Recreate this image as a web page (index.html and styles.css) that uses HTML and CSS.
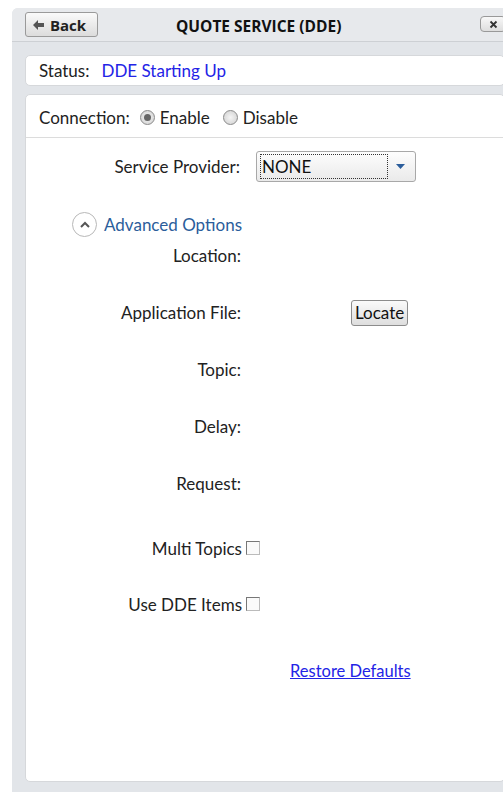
FILE: index.html
```html
<!DOCTYPE html>
<html>
<head>
<meta charset="utf-8">
<link rel="stylesheet" href="styles.css">
</head>
<body>
<div class="window">
  <header class="titlebar">
    <button class="back-btn"><svg width="11" height="10" viewBox="0 0 11 10"><path d="M0 5 L5 0 L5 3 L11 3 L11 7 L5 7 L5 10 Z" fill="#555"/></svg>Back</button>
    <h1 class="title">QUOTE SERVICE (DDE)</h1>
    <button class="close-btn"><svg width="9" height="9" viewBox="0 0 9 9"><path d="M1.5 1.5 L7.5 7.5 M7.5 1.5 L1.5 7.5" stroke="#333" stroke-width="1.8"/></svg></button>
  </header>
  <div class="body">
    <div class="card status-card">
      <span class="status-label">Status:</span>
      <span class="status-value">DDE Starting Up</span>
    </div>
    <div class="card main-card">
      <div class="connection-row">
        <span>Connection:</span>
        <label class="radio"><span class="radio-dot checked"></span>Enable</label>
        <label class="radio"><span class="radio-dot"></span>Disable</label>
      </div>
      <div class="provider-row">
        <span class="field-label">Service Provider:</span>
        <div class="select"><span class="select-value">NONE</span><svg class="select-arrow" width="9" height="5" viewBox="0 0 9 5"><path d="M0 0 H9 L4.5 5 Z" fill="#2b5d9b"/></svg></div>
      </div>
      <div class="advanced">
        <span class="adv-icon"><svg width="12" height="8" viewBox="0 0 12 8"><path d="M2 6 L6 2 L10 6" fill="none" stroke="#555" stroke-width="2"/></svg></span>
        <span class="adv-text">Advanced Options</span>
      </div>
      <div class="fields">
        <span class="field-label">Location:</span><span></span>
        <span class="field-label">Application File:</span><span class="locate-cell"><button class="locate-btn">Locate</button></span>
        <span class="field-label">Topic:</span><span></span>
        <span class="field-label">Delay:</span><span></span>
        <span class="field-label">Request:</span><span></span>
      </div>
      <div class="checks">
        <div class="check-row"><span>Multi Topics</span><span class="checkbox"></span></div>
        <div class="check-row"><span>Use DDE Items</span><span class="checkbox"></span></div>
      </div>
      <div class="restore-row"><a class="restore" href="#">Restore Defaults</a></div>
    </div>
  </div>
</div>
</body>
</html>
```
FILE: styles.css
```css
html, body {
  margin: 0;
  padding: 0;
  background: #fff;
  overflow: hidden;
}
body {
  font-family: Lato, "Open Sans", sans-serif;
  font-size: 17px;
  color: #222;
}
.window {
  margin: 8px 0 0 12px;
  width: 500px;
  height: 790px;
  background: #e2e5e9;
  border-top-left-radius: 6px;
  display: flex;
  flex-direction: column;
}
.titlebar {
  height: 33px;
  display: flex;
  align-items: center;
  padding: 0 0 0 13px;
  border-bottom: 1px solid #cdd0d4;
  background: #e7e9ec;
  border-top-left-radius: 6px;
  position: relative;
}
.back-btn {
  width: 73px;
  height: 25px;
  display: flex;
  align-items: center;
  justify-content: center;
  gap: 6px;
  font-family: "Open Sans", sans-serif;
  font-weight: bold;
  font-size: 15px;
  color: #222;
  border: 1px solid #9a9a9a;
  border-radius: 3px;
  background: linear-gradient(#fafafa, #dcdcdc);
  padding: 0 4px 0 0;
}
.title {
  margin: 2px 0 0 78px;
  font-family: "Open Sans", sans-serif;
  font-size: 15.5px;
  font-weight: bold;
  color: #111;
}
.close-btn {
  position: absolute;
  left: 468px;
  top: 8px;
  width: 26px;
  height: 16px;
  padding: 0;
  display: flex;
  align-items: center;
  justify-content: center;
  border: 1px solid #999;
  border-radius: 4px;
  background: linear-gradient(#f8f8f8, #dedede);
}
.body {
  padding: 13px 0 10px 13px;
  display: flex;
  flex-direction: column;
  gap: 8px;
  flex: 1;
}
.card {
  background: #fff;
  border: 1px solid #d6d8db;
  border-radius: 5px;
  width: 480px;
}
.status-card {
  height: 31px;
  display: flex;
  align-items: center;
  padding-left: 13px;
  box-sizing: border-box;
  gap: 12px;
}
.status-value {
  color: #2323e6;
}
.main-card {
  height: 688px;
  box-sizing: border-box;
}
.connection-row {
  height: 43px;
  border-bottom: 1px solid #dcdcdc;
  display: flex;
  align-items: center;
  padding: 3px 0 0 13px;
  box-sizing: border-box;
  gap: 10px;
}
.radio {
  display: flex;
  align-items: center;
  gap: 5px;
  margin-right: 3px;
}
.radio-dot {
  width: 15px;
  height: 15px;
  border-radius: 50%;
  border: 1px solid #8a8a8a;
  background: radial-gradient(#f4f4f4, #cfcfcf);
  box-sizing: border-box;
  position: relative;
}
.radio-dot.checked::after {
  content: "";
  position: absolute;
  left: 3px;
  top: 3px;
  width: 7px;
  height: 7px;
  border-radius: 50%;
  background: #666;
}
.field-label {
  text-align: right;
}
.provider-row {
  display: grid;
  grid-template-columns: 214px auto;
  column-gap: 16px;
  align-items: center;
  margin-top: 13px;
}
.select {
  width: 160px;
  height: 31px;
  border: 1px solid #a8a8a8;
  border-radius: 3px;
  background: linear-gradient(#fdfdfd, #eaeaea);
  display: flex;
  align-items: center;
  box-sizing: border-box;
  padding: 2px 3px;
}
.select-value {
  flex: 0 0 128px;
  height: 25px;
  border: 1px dotted #333;
  box-sizing: border-box;
  line-height: 24px;
  padding-left: 1px;
  color: #111;
}
.select-arrow {
  margin-left: 8px;
}
.advanced {
  display: flex;
  align-items: center;
  gap: 7px;
  margin: 30px 0 0 46px;
}
.adv-icon {
  width: 25px;
  height: 25px;
  border: 1px solid #b8b8b8;
  border-radius: 50%;
  display: flex;
  align-items: center;
  justify-content: center;
  box-sizing: border-box;
}
.adv-text {
  color: #2b5d9b;
}
.fields {
  display: grid;
  grid-template-columns: 215px auto;
  grid-auto-rows: 57px;
  align-items: center;
  margin-top: -10px;
}
.locate-cell {
  padding-left: 110px;
}
.locate-btn {
  font-family: Lato, "Open Sans", sans-serif;
  font-size: 17px;
  color: #111;
  height: 26px;
  padding: 0 3px;
  border: 1px solid #8c8c8c;
  border-radius: 3px;
  background: linear-gradient(#fafafa, #dedede);
}
.checks {
  display: flex;
  flex-direction: column;
  gap: 36px;
  margin-top: 26px;
}
.check-row {
  display: flex;
  justify-content: flex-end;
  align-items: center;
  gap: 4px;
  width: 234px;
  height: 20px;
}
.checkbox {
  width: 14px;
  height: 14px;
  border: 1px solid #777;
  border-right-color: #bbb;
  border-bottom-color: #bbb;
  box-sizing: border-box;
  background: #fafafa;
}
.restore-row {
  margin: 46px 0 0 264px;
}
.restore {
  color: #2323e6;
  text-decoration: underline;
  font-size: 16.5px;
}
```
